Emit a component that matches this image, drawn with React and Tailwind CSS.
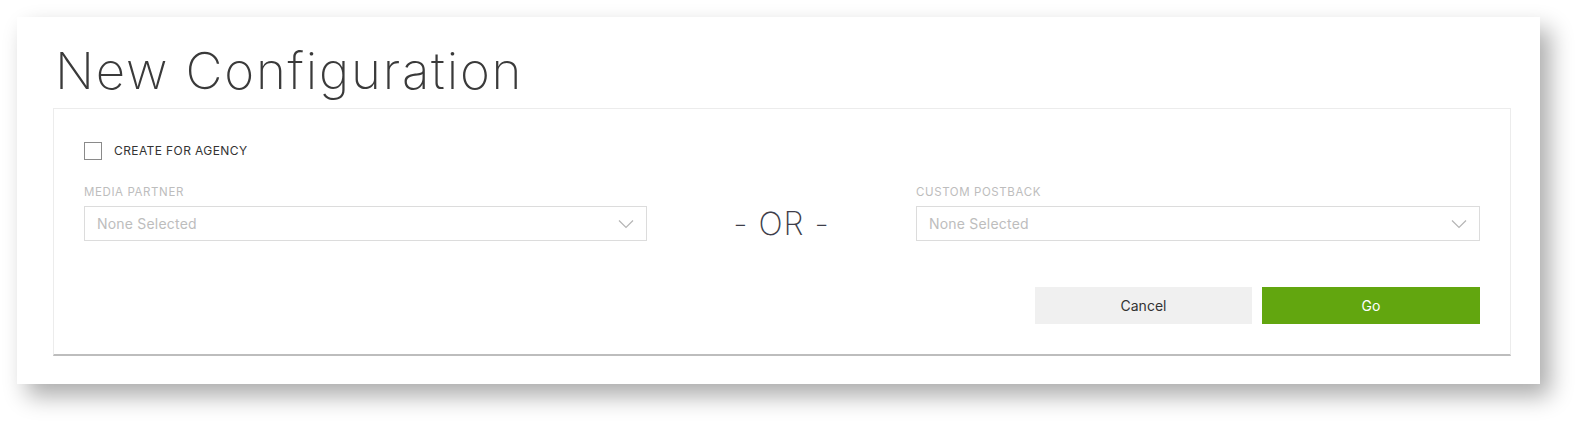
import { useState } from "react";

function Chevron() {
  return (
    <svg width="16" height="10" viewBox="0 0 16 10" fill="none" className="shrink-0">
      <path d="M1 1.5 L8 8.5 L15 1.5" stroke="#b5b5b5" strokeWidth="1.2" />
    </svg>
  );
}

function SelectBox({ label }) {
  return (
    <div>
      <div className="text-[11.5px] leading-none uppercase text-[#bdbdbd] tracking-[0.6px] mb-[8px] h-[11px]">{label}</div>
      <div className="h-[35px] border border-[#dcdcdc] flex items-center justify-between pl-[12px] pr-[12px] bg-white">
        <span className="text-[14px] text-[#bdbdbd] tracking-[0.2px]">None Selected</span>
        <Chevron />
      </div>
    </div>
  );
}

export default function App() {
  const [agency, setAgency] = useState(false);

  return (
    <div className="min-h-screen bg-white pt-[17px] pl-[17px]" style={{ fontFamily: "Inter, 'Noto Sans', sans-serif" }}>
      {/* card */}
      <div className="w-[1523px] h-[367px] bg-white shadow-[10px_12px_22px_rgba(0,0,0,0.33)] pt-[26px]">
        <h1 className="pl-[38px] text-[51px] leading-[56px] font-extralight text-[#3a3a3a] tracking-[1.8px]">
          New Configuration
        </h1>

        {/* panel */}
        <div className="ml-[36px] mt-[9px] w-[1458px] border border-[#ececec] border-b-2 border-b-[#bdbdbd] px-[30px] pt-[33px] pb-[30px]">
          <label className="flex items-center gap-[12px] cursor-pointer">
            <input
              type="checkbox"
              checked={agency}
              onChange={(e) => setAgency(e.target.checked)}
              className="sr-only"
            />
            <span className="w-[18px] h-[18px] border border-[#8a8a8a] bg-white" />
            <span className="text-[12px] text-[#333] uppercase tracking-[0.4px]">Create for agency</span>
          </label>

          <div className="grid grid-cols-[563px_1fr_564px] mt-[27px]">
            <SelectBox label="Media Partner" />
            <div className="flex flex-col justify-end">
              <div className="h-[35px] flex items-center justify-center">
                <span className="text-[32px] font-extralight text-[#3e3e4a] leading-none tracking-[1px]">- OR -</span>
              </div>
            </div>
            <SelectBox label="Custom Postback" />
          </div>

          <div className="flex justify-end gap-[10px] mt-[46px]">
            <button type="button" className="w-[217px] h-[37px] bg-[#f0f0f0] text-[14px] text-[#333]">
              Cancel
            </button>
            <button type="button" className="w-[218px] h-[37px] bg-[#62a60f] text-[14px] text-white">
              Go
            </button>
          </div>
        </div>
      </div>
    </div>
  );
}
